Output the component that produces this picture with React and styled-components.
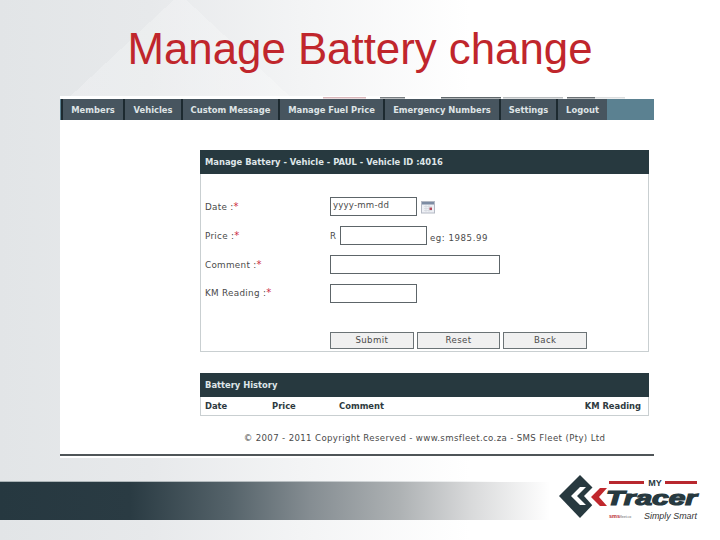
import React from "react";
import styled, { createGlobalStyle } from "styled-components";

const GlobalStyle = createGlobalStyle`
	html, body {
		margin: 0;
		padding: 0;
	}
`;

const Slide = styled.div`
	width: 720px;
	height: 540px;
	overflow: hidden;
	display: flex;
	flex-direction: column;
	font-family: "DejaVu Sans", Verdana, sans-serif;
	background:
		conic-gradient(from 133deg at 180px -6px, rgba(255, 255, 255, 0.22) 0 94deg, transparent 0) 0 0 / 720px 100px no-repeat,
		linear-gradient(90deg, #e2e5e7 0, #e7e9eb 150px, #f3f4f5 300px, #ffffff 470px);
`;

const Title = styled.h1`
	margin: 0;
	height: 96px;
	box-sizing: border-box;
	padding: 22px 0 0 0;
	text-align: center;
	font-family: "Liberation Sans", Arial, sans-serif;
	font-weight: 400;
	font-size: 43.8px;
	line-height: 54px;
	color: #c0262c;
`;

const Capture = styled.div`
	width: 594px;
	height: 362px;
	margin-left: 60px;
	background: #ffffff;
`;

const HeaderStrip = styled.div`
	height: 3px;
	background: linear-gradient(
			90deg,
			#ffffff 0 263px,
			#d8b6ba 263px 306px,
			#ffffff 306px 320px,
			#767c80 320px 345px,
			#ffffff 345px 381px,
			#5f676b 381px 441px,
			#ffffff 441px 443px,
			#b9bdbf 443px 503px,
			#ffffff 503px 507px,
			#6a7074 507px 535px,
			#dcdedf 535px 565px,
			#ffffff 565px
		)
		0 1px / 100% 1.5px no-repeat;
`;

const Nav = styled.nav`
	display: flex;
	height: 21px;
	padding-left: 1px;
	background: #5b8191;
`;

const NavItem = styled.a`
	box-sizing: border-box;
	width: ${(p) => p.$width}px;
	border-left: 2px solid #1d2a30;
	background: #47555f;
	color: #dfe4e6;
	font-size: 8.4px;
	font-weight: 700;
	line-height: 22px;
	text-align: center;
	white-space: nowrap;
`;

const Panel = styled.section`
	width: 449px;
	margin-left: 140px;
	margin-top: ${(p) => p.$top}px;
	box-sizing: border-box;
	height: ${(p) => p.$height}px;
	border: 1px solid #c9cfd1;
	border-top: 0;
`;

const PanelTitle = styled.h2`
	margin: 0 -1px;
	height: 24px;
	padding-left: 5px;
	background: #27393f;
	color: #dfe6e8;
	font-size: 8.4px;
	font-weight: 700;
	line-height: 24px;
`;

const Form = styled.form`
	display: flex;
	flex-direction: column;
	padding-top: 23px;
`;

const Row = styled.div`
	display: grid;
	grid-template-columns: 129px 1fr;
	align-items: start;
	height: ${(p) => p.$height || 29}px;
`;

const Label = styled.label`
	padding-left: 4px;
	padding-top: ${(p) => p.$top ?? 5}px;
	color: #4a4a4a;
	font-size: 8.8px;
	line-height: 12px;
	letter-spacing: 0.3px;
`;

const Required = styled.span`
	color: #cc2a45;
	font-size: 10px;
`;

const Field = styled.div`
	display: flex;
	align-items: center;
	color: #4a4a4a;
	font-size: 8.6px;
`;

const Input = styled.div`
	box-sizing: border-box;
	width: ${(p) => p.$width}px;
	height: 19px;
	padding-left: 2px;
	border: 1px solid #5d6569;
	background: #fff;
	color: #4a4a4a;
	font-size: 8.6px;
	letter-spacing: 0.2px;
	line-height: 14px;
`;

const Prefix = styled.span`
	width: 10px;
`;

const Hint = styled.span`
	margin-left: 3px;
	margin-top: 4px;
	letter-spacing: 0.55px;
`;

const CalendarIcon = styled.svg`
	margin-left: 4px;
`;

const Buttons = styled.div`
	display: grid;
	grid-template-columns: repeat(3, 1fr);
	gap: 3px;
	width: 257px;
	margin-left: 129px;
	margin-top: 1px;
`;

const Button = styled.div`
	box-sizing: border-box;
	height: 17px;
	border: 1px solid #6b7376;
	background: #f0f0f0;
	color: #4a4a4a;
	font-size: 8.6px;
	line-height: 15px;
	text-align: center;
	letter-spacing: 0.4px;
`;

const HistoryHead = styled.div`
	display: grid;
	grid-template-columns: 67px 67px 1fr auto;
	padding: 0 7px 0 4px;
	height: 18px;
	color: #2e3a40;
	font-size: 8.4px;
	font-weight: 700;
	line-height: 18px;
`;

const Copyright = styled.p`
	margin: 16px 0 0 0;
	padding-left: 135px;
	text-align: center;
	color: #4a4a4a;
	font-size: 8.6px;
	letter-spacing: 0.36px;
	line-height: 12px;
	white-space: nowrap;
`;

const Rule = styled.hr`
	margin: 10px 0 0 0;
	height: 2px;
	border: 0;
	background: #4f5558;
`;

const Footer = styled.footer`
	display: flex;
	align-items: flex-start;
	height: 66px;
	margin-top: 16px;
`;

const Band = styled.div`
	flex: 1;
	height: 39px;
	margin-top: 7px;
	background:
		linear-gradient(90deg, #a9b2b5 0, #b9bfc2 300px, #ffffff 500px) 0 0 / 100% 1px no-repeat,
		linear-gradient(
			90deg,
			#263840 0,
			#2a3b43 130px,
			#55636a 230px,
			#858d92 310px,
			#aeb2b4 400px,
			#d8d9da 470px,
			#ffffff 550px
		);
`;

const Logo = styled.svg`
	display: block;
	width: 170px;
	height: 60px;
	background: #fff;
`;

const navItems = [
	["Members", 62],
	["Vehicles", 58],
	["Custom Message", 97],
	["Manage Fuel Price", 105],
	["Emergency Numbers", 116],
	["Settings", 57],
	["Logout", 51],
];

function Calendar() {
	return (
		<CalendarIcon width="14" height="14" viewBox="0 0 14 14">
			<rect x="0.5" y="1.5" width="13" height="11.5" fill="#eef0f5" stroke="#b4b9c4" />
			<rect x="1" y="2" width="12" height="2.5" fill="#7d8ca3" />
			<path d="M3 6.5h8M3 8.5h8M3 10.5h8M5 5v7M8 5v7" stroke="#d3d7de" strokeWidth="0.7" />
			<rect x="8.5" y="7.5" width="2.5" height="2.5" fill="#b5485a" />
		</CalendarIcon>
	);
}

function TracerLogo() {
	return (
		<Logo viewBox="0 0 170 60">
			{/* diamond with the two chevrons cut out of it */}
			<path d="M9 22 L30 1 L51 22 L30 44 Z" fill="#27393f" />
			<path d="M21 22 L30 13 L36 13 L27 22 L36 31 L30 31 Z" fill="#fff" />
			<path d="M34 22 L43 13 L58 13 L58 32 L43 32 Z" fill="#fff" />
			<path d="M41 23 L50 14 L57 14 L49 23 L57 32 L50 32 Z" fill="#c0272d" />
			<rect x="59" y="7" width="35" height="3" fill="#b8282e" />
			<rect x="115" y="7" width="32" height="3" fill="#b8282e" />
			<text x="105" y="11.5" textAnchor="middle" fontFamily="Liberation Sans, sans-serif" fontSize="9" fontWeight="700" fill="#27393f">MY</text>
			<text x="56" y="31" fontFamily="Liberation Sans, sans-serif" fontSize="20" fontWeight="700" fontStyle="italic" stroke="#27393f" strokeWidth="1.2" fill="#27393f" textLength="91" lengthAdjust="spacingAndGlyphs">Tracer</text>
			<text x="59" y="44" fontFamily="Liberation Sans, sans-serif" fontSize="5.5" fontWeight="700" fill="#b8282e">sms</text>
			<text x="70" y="44" fontFamily="Liberation Sans, sans-serif" fontSize="3.5" fill="#666">fleet.co</text>
			<text x="94" y="45" fontFamily="Liberation Sans, sans-serif" fontSize="9" fontStyle="italic" fill="#333" textLength="53" lengthAdjust="spacingAndGlyphs">Simply Smart</text>
		</Logo>
	);
}

function App() {
	return (
		<Slide>
			<GlobalStyle />
			<Title>Manage Battery change</Title>
			<Capture>
				<HeaderStrip />
				<Nav>
					{navItems.map(([label, width]) => (
						<NavItem key={label} $width={width}>
							{label}
						</NavItem>
					))}
				</Nav>
				<Panel $top={30} $height={202}>
					<PanelTitle>Manage Battery - Vehicle - PAUL - Vehicle ID :4016</PanelTitle>
					<Form>
						<Row>
							<Label $top={4}>
								Date :<Required>*</Required>
							</Label>
							<Field>
								<Input $width={87}>yyyy-mm-dd</Input>
								<Calendar />
							</Field>
						</Row>
						<Row>
							<Label $top={4}>
								Price :<Required>*</Required>
							</Label>
							<Field>
								<Prefix>R</Prefix>
								<Input $width={87} />
								<Hint>eg: 1985.99</Hint>
							</Field>
						</Row>
						<Row>
							<Label $top={4}>
								Comment :<Required>*</Required>
							</Label>
							<Field>
								<Input $width={170} />
							</Field>
						</Row>
						<Row $height={47}>
							<Label $top={3}>
								KM Reading :<Required>*</Required>
							</Label>
							<Field>
								<Input $width={87} />
							</Field>
						</Row>
						<Buttons>
							<Button>Submit</Button>
							<Button>Reset</Button>
							<Button>Back</Button>
						</Buttons>
					</Form>
				</Panel>
				<Panel $top={21} $height={43}>
					<PanelTitle>Battery History</PanelTitle>
					<HistoryHead>
						<span>Date</span>
						<span>Price</span>
						<span>Comment</span>
						<span>KM Reading</span>
					</HistoryHead>
				</Panel>
				<Copyright>© 2007 - 2011 Copyright Reserved - www.smsfleet.co.za - SMS Fleet (Pty) Ltd</Copyright>
				<Rule />
			</Capture>
			<Footer>
				<Band />
				<TracerLogo />
			</Footer>
		</Slide>
	);
}

export default App;
